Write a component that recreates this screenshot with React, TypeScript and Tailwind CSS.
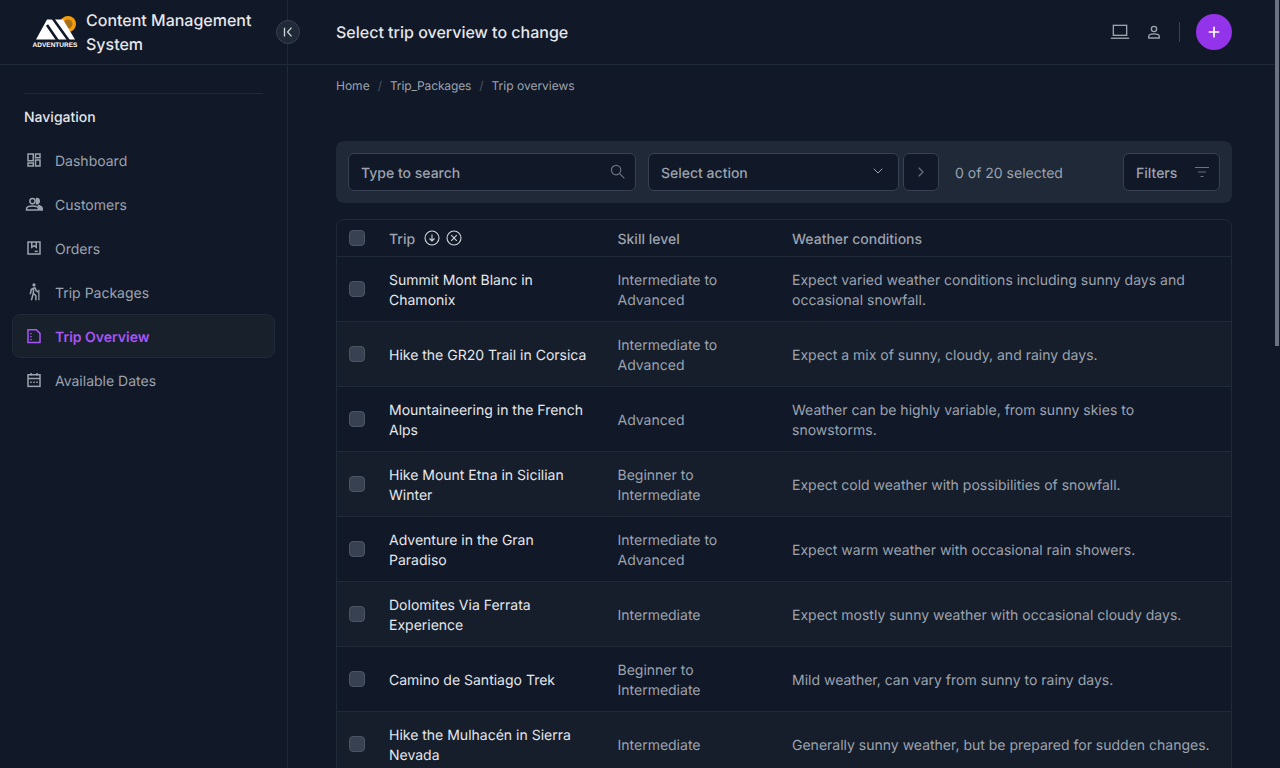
import { ChevronDown, ChevronRight, Plus } from 'lucide-react'

const navItems = [
  { label: 'Dashboard', icon: 'dashboard' },
  { label: 'Customers', icon: 'customers' },
  { label: 'Orders', icon: 'orders' },
  { label: 'Trip Packages', icon: 'hiking' },
  { label: 'Trip Overview', icon: 'overview', active: true },
  { label: 'Available Dates', icon: 'calendar' },
]

const trips = [
  { trip: 'Summit Mont Blanc in Chamonix', skill: 'Intermediate to Advanced', weather: 'Expect varied weather conditions including sunny days and occasional snowfall.' },
  { trip: 'Hike the GR20 Trail in Corsica', skill: 'Intermediate to Advanced', weather: 'Expect a mix of sunny, cloudy, and rainy days.' },
  { trip: 'Mountaineering in the French Alps', skill: 'Advanced', weather: 'Weather can be highly variable, from sunny skies to snowstorms.' },
  { trip: 'Hike Mount Etna in Sicilian Winter', skill: 'Beginner to Intermediate', weather: 'Expect cold weather with possibilities of snowfall.' },
  { trip: 'Adventure in the Gran Paradiso', skill: 'Intermediate to Advanced', weather: 'Expect warm weather with occasional rain showers.' },
  { trip: 'Dolomites Via Ferrata Experience', skill: 'Intermediate', weather: 'Expect mostly sunny weather with occasional cloudy days.' },
  { trip: 'Camino de Santiago Trek', skill: 'Beginner to Intermediate', weather: 'Mild weather, can vary from sunny to rainy days.' },
  { trip: 'Hike the Mulhacén in Sierra Nevada', skill: 'Intermediate', weather: 'Generally sunny weather, but be prepared for sudden changes.' },
]

function NavIcon({ name }: { name: string }) {
  return (
    <svg viewBox="0 0 24 24" className="w-[18px] h-[18px] shrink-0" fill="none" stroke="currentColor" strokeWidth="2">
      {name === 'dashboard' && (
        <>
          <rect x="4" y="4" width="7" height="9" />
          <rect x="14" y="4" width="6" height="5" />
          <rect x="14" y="12" width="6" height="8" />
          <rect x="4" y="16" width="7" height="4" />
        </>
      )}
      {name === 'customers' && (
        <>
          <circle cx="10" cy="8" r="3.500" />
          <path d="M2 20v-1.500C2 16 5 14.500 10 14.500s8 1.500 8 4V20Z" />
          <path d="M15.500 4.500a3.500 3.500 0 0 1 0 7Z" fill="currentColor" />
          <path d="M18 14c2.500.6 5 2 5 4.500V20h-3Z" fill="currentColor" />
        </>
      )}
      {name === 'orders' && (
        <>
          <rect x="4" y="4" width="16" height="16" />
          <path d="M9 4v7l3-2 3 2V4" />
          <path d="M13 16.500h4" />
        </>
      )}
      {name === 'hiking' && (
        <>
          <circle cx="12" cy="2.500" r="2.200" fill="currentColor" stroke="none" />
          <path d="M8.500 23l2.500-9 .5-7-3 1.500L7 15" />
          <path d="M11.500 6.500h2l1.500 4 3 1.500" />
          <path d="M11.500 14l3 3v6" />
          <path d="M18.500 9v14" strokeWidth="1.600" />
        </>
      )}
      {name === 'overview' && (
        <>
          <path d="M4 3.500h11l5 5V20.500H4Z" />
          <path d="M8 8v1.500M8 12v1.500M8 16v1.500" />
        </>
      )}
      {name === 'calendar' && (
        <>
          <rect x="4" y="5" width="16" height="15.500" />
          <path d="M4 10h16M8 2.500V6M16 2.500V6" />
          <path d="M7 15h2M11 15h2M15 15h2" />
        </>
      )}
    </svg>
  )
}

function Logo() {
  return (
    <div className="flex flex-col items-center w-[46px] shrink-0">
      <svg viewBox="0 0 44 27" className="w-[44px] h-[27px]">
        <circle cx="35" cy="9" r="8" fill="#f59e0b" />
        <circle cx="35" cy="9" r="4.500" fill="#a9701c" />
        <path d="M3 24.500 14 4.500H30l12 20Z" fill="#ffffff" />
        <path d="M14 10 25 26M19.500 3 36 26" stroke="#111827" strokeWidth="2.600" fill="none" />
      </svg>
      <span className="text-[6.5px] leading-[7px] font-bold text-white font-['Liberation_Sans',sans-serif]">ADVENTURES</span>
    </div>
  )
}

function Checkbox() {
  return <span className="block w-4 h-4 rounded bg-[#374151] border border-[#4b5563]" />
}

export default function App() {
  return (
    <div className="h-screen overflow-hidden flex bg-[#111827] font-['Inter',sans-serif] [text-rendering:geometricPrecision]">
      <aside className="w-[288px] shrink-0 border-r border-[#1f2937]">
        <div className="relative h-[65px] border-b border-[#1f2937] flex items-center pl-[32px] pr-6 gap-[8px]">
          <Logo />
          <h1 className="text-base leading-6 font-medium text-[#e5e7eb]">Content Management System</h1>
          <button className="absolute -right-[13px] top-[20px] w-6 h-6 rounded-full bg-[#1f2937] border border-[#374151] flex items-center justify-center text-[#d1d5db]">
            <svg viewBox="0 0 16 16" className="w-3.5 h-3.5" fill="none" stroke="currentColor" strokeWidth="1.500">
              <path d="M4 3v10M12 3 7.500 8l4.500 5" />
            </svg>
          </button>
        </div>
        <div className="px-3 pt-7">
          <div className="mx-3 border-t border-[#1f2937]" />
          <p className="mx-3 mt-[14px] text-sm leading-5 font-medium text-[#e5e7eb]">Navigation</p>
          <nav className="mt-[10px] flex flex-col">
            {navItems.map((item) => (
              <a
                key={item.label}
                className={
                  item.active
                    ? 'h-11 flex items-center gap-3 px-[12px] rounded-lg border border-[#1f2937] bg-[#18202c] text-[#a855f7] text-sm font-semibold'
                    : 'h-11 flex items-center gap-3 px-[12px] rounded-lg border border-transparent text-[#9ca3af] text-sm'
                }
              >
                <NavIcon name={item.icon} />
                <span className="pt-1">{item.label}</span>
              </a>
            ))}
          </nav>
        </div>
      </aside>

      <main className="flex-1 min-w-0">
        <header className="h-[65px] border-b border-[#1f2937] flex items-center justify-between pl-12 pr-11">
          <h2 className="text-base font-medium text-[#e5e7eb]">Select trip overview to change</h2>
          <div className="flex items-center">
            <svg viewBox="0 0 24 24" className="w-5 h-5 text-[#9ca3af]" fill="none" stroke="currentColor" strokeWidth="1.600">
              <rect x="4" y="4" width="16" height="12" />
              <path d="M1 19.500h22" />
            </svg>
            <svg viewBox="0 0 24 24" className="w-[18px] h-[18px] ml-[15px] text-[#9ca3af]" fill="none" stroke="currentColor" strokeWidth="1.800">
              <circle cx="12" cy="8" r="3.500" />
              <path d="M5 20v-2c0-2 3-3.500 7-3.500s7 1.500 7 3.500v2Z" />
            </svg>
            <span className="w-px h-5 bg-[#374151] ml-4 mr-4" />
            <button className="w-9 h-9 rounded-full bg-[#9333ea] flex items-center justify-center text-white">
              <Plus className="w-4 h-4" strokeWidth={2.500} />
            </button>
          </div>
        </header>

        <div className="pl-12 pr-11">
          <div className="h-[42px] flex items-center gap-2 text-xs text-[#9ca3af]">
            <span>Home</span>
            <span className="text-[#4b5563]">/</span>
            <span className="tracking-[-0.15px]">Trip_Packages</span>
            <span className="text-[#4b5563]">/</span>
            <span>Trip overviews</span>
          </div>

          <div className="mt-[34px] h-[62px] rounded-lg bg-[#1f2937] flex items-center px-3 text-sm text-[#9ca3af]">
            <div className="w-[288px] h-[38px] rounded-md border border-[#374151] bg-[#111827] flex items-center justify-between pl-3 pr-2.5">
              <span className="font-medium pt-1">Type to search</span>
              <svg viewBox="0 0 16 16" className="w-[15px] h-[15px] text-[#6b7280] -mt-0.5" fill="none" stroke="currentColor" strokeWidth="1.300">
                <circle cx="6.500" cy="6.500" r="5" />
                <path d="m10.300 10.300 5 5" />
              </svg>
            </div>
            <div className="ml-3 w-[251px] h-[38px] rounded-md border border-[#374151] bg-[#111827] flex items-center justify-between pl-3 pr-3">
              <span className="font-medium pt-1">Select action</span>
              <ChevronDown className="w-4 h-4 text-[#9ca3af] -mt-0.5" strokeWidth={1.500} />
            </div>
            <div className="ml-[4px] w-9 h-[38px] rounded-md border border-[#374151] bg-[#111827] flex items-center justify-center">
              <ChevronRight className="w-4 h-4 text-[#6b7280]" strokeWidth={1.800} />
            </div>
            <span className="ml-4 pt-1">0 of 20 selected</span>
            <div className="ml-auto w-[97px] h-[38px] rounded-md border border-[#374151] bg-[#111827] flex items-center justify-between pl-3 pr-[9px]">
              <span className="font-medium pt-1">Filters</span>
              <svg viewBox="0 0 16 16" className="w-4 h-4 text-[#6b7280]" fill="none" stroke="currentColor" strokeWidth="1.200">
                <path d="M1 3.500h14M4 8h8M6.500 12.500h3" />
              </svg>
            </div>
          </div>

          <div className="mt-4 rounded-lg border border-[#1f2937] text-sm">
            <div className="h-[37px] flex items-center border-b border-[#1f2937] font-medium text-[#9ca3af]">
              <div className="w-[52px] pl-3 shrink-0"><Checkbox /></div>
              <div className="w-[228.5px] shrink-0 flex items-center gap-[9px]">
                <span className="pt-1">Trip</span>
                <span className="flex items-center gap-1.5 text-[#d1d5db]">
                  <svg viewBox="0 0 16 16" className="w-4 h-4" fill="none" stroke="currentColor" strokeWidth="1.100">
                    <circle cx="8" cy="8" r="7" />
                    <path d="M8 4.500v6M5.500 8.500 8 11l2.500-2.500" />
                  </svg>
                  <svg viewBox="0 0 16 16" className="w-4 h-4" fill="none" stroke="currentColor" strokeWidth="1.100">
                    <circle cx="8" cy="8" r="7" />
                    <path d="m5.200 5.200 5.600 5.600M10.800 5.200l-5.600 5.600" />
                  </svg>
                </span>
              </div>
              <div className="w-[174.5px] shrink-0 pt-1">Skill level</div>
              <div className="pt-1">Weather conditions</div>
            </div>
            {trips.map((t, i) => (
              <div
                key={t.trip}
                className={
                  i % 2 === 1
                    ? 'h-[65px] flex items-center border-b border-[#1f2937] bg-[#161e2b]'
                    : 'h-[65px] flex items-center border-b border-[#1f2937]'
                }
              >
                <div className="w-[52px] pl-3 shrink-0"><Checkbox /></div>
                <div className="w-[228.5px] shrink-0 pr-6 pt-1 leading-5 text-[#e5e7eb]">{t.trip}</div>
                <div className="w-[174.5px] shrink-0 pr-6 pt-1 leading-5 text-[#9ca3af]">{t.skill}</div>
                <div className="flex-1 pr-3 pt-1 leading-5 text-[#9ca3af]">{t.weather}</div>
              </div>
            ))}
          </div>
        </div>
      </main>

      {/* scrollbar */}
      <div className="w-1 shrink-0">
        <div className="h-[346px] w-[4px] -ml-px bg-[#6b7280]" />
      </div>
    </div>
  )
}
